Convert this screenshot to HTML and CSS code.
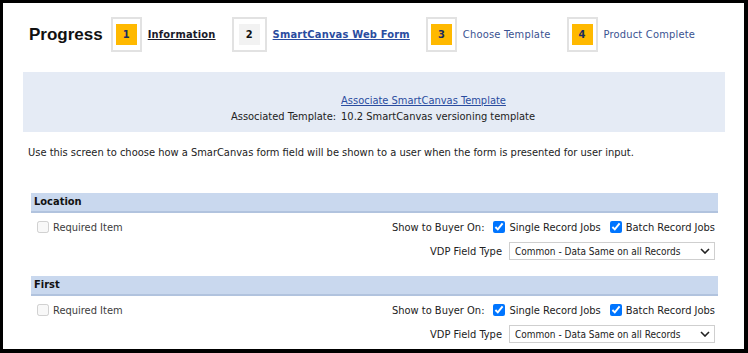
FILE: index.html
```html
<!DOCTYPE html>
<html lang="en">
<head>
  <meta charset="UTF-8" />
  <title>SmartCanvas Web Form</title>
  <link rel="stylesheet" href="styles.css">
</head>
<body>
  <div class="frame">
    <div class="progress">
      <h1>Progress</h1>
      <div class="step">
        <div class="step-box"><span class="step-num active">1</span></div>
        <a href="#" class="step-label visited">Information</a>
      </div>
      <div class="step">
        <div class="step-box wide"><span class="step-num current">2</span></div>
        <a href="#" class="step-label current">SmartCanvas Web Form</a>
      </div>
      <div class="step">
        <div class="step-box"><span class="step-num active">3</span></div>
        <span class="step-label">Choose Template</span>
      </div>
      <div class="step">
        <div class="step-box"><span class="step-num active">4</span></div>
        <span class="step-label">Product Complete</span>
      </div>
    </div>

    <div class="template-panel">
      <div class="template-grid">
        <span></span>
        <a href="#">Associate SmartCanvas Template</a>
        <span>Associated Template:</span>
        <span>10.2 SmartCanvas versioning template</span>
      </div>
    </div>

    <p class="intro">Use this screen to choose how a SmarCanvas form field will be shown to a user when the form is presented for user input.</p>

    <div class="field">
      <div class="field-head">Location</div>
      <div class="field-body">
        <label class="required"><input type="checkbox" disabled /> Required Item</label>
        <div class="field-opts">
          <div class="buyer">
            <span>Show to Buyer On:</span>
            <label><input type="checkbox" checked /> Single Record Jobs</label>
            <label><input type="checkbox" checked /> Batch Record Jobs</label>
          </div>
          <div class="vdp">
            <span>VDP Field Type</span>
            <div class="select-wrap">
              <select>
                <option>Common - Data Same on all Records</option>
              </select>
              <svg class="chevron" width="10" height="6" viewBox="0 0 10 6"><path d="M1 1l4 4 4-4" fill="none" stroke="#222" stroke-width="1.6"/></svg>
            </div>
          </div>
        </div>
      </div>
    </div>

    <div class="field">
      <div class="field-head">First</div>
      <div class="field-body">
        <label class="required"><input type="checkbox" disabled /> Required Item</label>
        <div class="field-opts">
          <div class="buyer">
            <span>Show to Buyer On:</span>
            <label><input type="checkbox" checked /> Single Record Jobs</label>
            <label><input type="checkbox" checked /> Batch Record Jobs</label>
          </div>
          <div class="vdp">
            <span>VDP Field Type</span>
            <div class="select-wrap">
              <select>
                <option>Common - Data Same on all Records</option>
              </select>
              <svg class="chevron" width="10" height="6" viewBox="0 0 10 6"><path d="M1 1l4 4 4-4" fill="none" stroke="#222" stroke-width="1.6"/></svg>
            </div>
          </div>
        </div>
      </div>
    </div>
  </div>
</body>
</html>
```

FILE: styles.css
```css
body {
  margin: 0;
  padding: 0;
  background: #000;
  font-family: "DejaVu Sans Condensed", "DejaVu Sans", sans-serif;
  font-stretch: condensed;
  font-size: 11px;
  color: #222;
}

.frame {
  box-sizing: border-box;
  width: 748px;
  height: 353px;
  border-style: solid;
  border-color: #000;
  border-width: 3px 4px 4px 3px;
  background: white;
  overflow: hidden;
}

.progress {
  display: flex;
  align-items: center;
  padding: 14px 0 0 26px;
  height: 35px;
}

.progress h1 {
  margin: 0 8px 0 0;
  font-family: "Liberation Sans", Arial, sans-serif;
  font-stretch: normal;
  font-size: 17px;
  font-weight: bold;
  color: #111;
}

.step {
  display: flex;
  align-items: center;
  margin-right: 16px;
}

.step-box {
  box-sizing: border-box;
  width: 31px;
  height: 35px;
  border: 2px solid #e2e2e2;
  display: flex;
  align-items: center;
  justify-content: center;
  margin-right: 6px;
}

.step-box.wide {
  width: 35px;
}

.step-num {
  width: 21px;
  height: 21px;
  display: flex;
  align-items: center;
  justify-content: center;
  font-weight: bold;
  color: #1c2b5e;
  margin-top: -1px;
}

.step-num.active {
  background: #ffb900;
}

.step-num.current {
  background: #f2f2f2;
  color: #111;
}

.step-label {
  color: #3a5291;
  letter-spacing: 0.2px;
}

a.step-label {
  font-weight: bold;
  letter-spacing: 0.2px;
}

a.step-label.visited {
  color: #1a1a2a;
}

a.step-label.current {
  color: #2a4c9f;
}

.template-panel {
  margin: 20px 19px 0 20px;
  height: 60px;
  background: #e5ebf5;
  display: flex;
  justify-content: center;
  align-items: flex-end;
}

.template-grid {
  display: grid;
  grid-template-columns: auto auto;
  column-gap: 5px;
  row-gap: 3px;
  padding: 0 0 9px 18px;
}

.template-grid a {
  color: #2a4c9f;
}

.intro {
  margin: 14px 0 0 25px;
}

.field {
  margin: 34px 26px 0 28px;
}

.field + .field {
  margin-top: 16px;
}

.field-head {
  background: #c9d8ee;
  border-bottom: 2px solid #b1c3de;
  height: 18px;
  line-height: 18px;
  padding-left: 3px;
  font-weight: bold;
  color: #111;
}

.field-body {
  display: flex;
  justify-content: space-between;
  padding: 5px 3px 0 6px;
}

.required {
  display: flex;
  align-items: center;
  color: #3c3c3c;
  height: 18px;
}

.required input,
.buyer input {
  margin: 0 4px 0 0;
  width: 12px;
  height: 12px;
}

.field-opts {
  display: flex;
  flex-direction: column;
  align-items: flex-end;
}

.buyer {
  display: flex;
  align-items: center;
  height: 18px;
  gap: 6px;
}

.buyer label {
  display: flex;
  align-items: center;
  margin-left: 3px;
}

.vdp {
  display: flex;
  align-items: center;
  gap: 7px;
  margin-top: 6px;
}

.select-wrap {
  position: relative;
}

.vdp select {
  appearance: none;
  display: block;
  width: 206px;
  height: 18px;
  border: 1px solid #cfcfcf;
  border-radius: 0;
  background: white;
  font-family: inherit;
  font-stretch: condensed;
  font-size: 10px;
  color: #222;
  padding: 0 0 0 5px;
}

.chevron {
  position: absolute;
  right: 5px;
  top: 6px;
}
```
